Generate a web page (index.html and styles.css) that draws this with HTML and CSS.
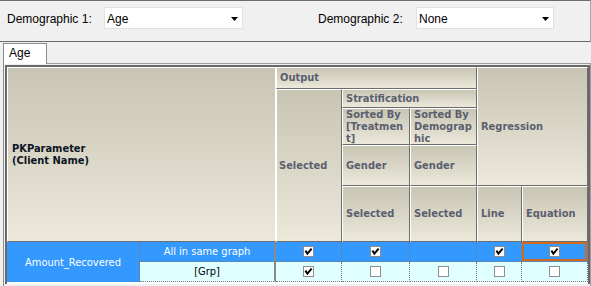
FILE: index.html
```html
<!DOCTYPE html>
<html>
<head>
<meta charset="utf-8">
<link rel="stylesheet" href="styles.css">
</head>
<body>
<div class="app">
  <div class="toolbar">
    <span class="lbl lbl1">Demographic 1:</span>
    <div class="combo combo1"><span class="val">Age</span><svg class="arrow" width="7" height="4" viewBox="0 0 7 4"><polygon points="0,0 7,0 3.5,4" fill="#000"/></svg></div>
    <span class="lbl lbl2">Demographic 2:</span>
    <div class="combo combo2"><span class="val">None</span><svg class="arrow" width="7" height="4" viewBox="0 0 7 4"><polygon points="0,0 7,0 3.5,4" fill="#000"/></svg></div>
  </div>
  <div class="tabs">
    <div class="tab">Age</div>
    <div class="tabfill"></div>
  </div>
  <div class="page">
    <div class="grid">
      <div class="h pk">PKParameter<br>(Client Name)</div>
      <div class="h out">Output</div>
      <div class="h reg">Regression</div>
      <div class="h sel">Selected</div>
      <div class="h strat">Stratification</div>
      <div class="h st1">Sorted By<br>[Treatmen<br>t]</div>
      <div class="h st2">Sorted By<br>Demograp<br>hic</div>
      <div class="h g1">Gender</div>
      <div class="h g2">Gender</div>
      <div class="h s1">Selected</div>
      <div class="h s2">Selected</div>
      <div class="h ln">Line</div>
      <div class="h eq">Equation</div>

      <div class="d blue amount">Amount_Recovered</div>
      <div class="d blue name">All in same graph</div>
      <div class="d blue chk"><svg class="cb" width="11" height="11" viewBox="0 0 11 11"><rect x="0.5" y="0.5" width="10" height="10" fill="#fff" stroke="#8e8e8e"/><path d="M2.4 4.6 L4.4 7.6 L8.6 2.6" fill="none" stroke="#000" stroke-width="1.9"/></svg></div>
      <div class="d blue chk"><svg class="cb" width="11" height="11" viewBox="0 0 11 11"><rect x="0.5" y="0.5" width="10" height="10" fill="#fff" stroke="#8e8e8e"/><path d="M2.4 4.6 L4.4 7.6 L8.6 2.6" fill="none" stroke="#000" stroke-width="1.9"/></svg></div>
      <div class="d blue chk"></div>
      <div class="d blue chk"><svg class="cb" width="11" height="11" viewBox="0 0 11 11"><rect x="0.5" y="0.5" width="10" height="10" fill="#fff" stroke="#8e8e8e"/><path d="M2.4 4.6 L4.4 7.6 L8.6 2.6" fill="none" stroke="#000" stroke-width="1.9"/></svg></div>
      <div class="d blue chk focus"><svg class="cb" width="11" height="11" viewBox="0 0 11 11"><rect x="0.5" y="0.5" width="10" height="10" fill="#fff" stroke="#8e8e8e"/><path d="M2.4 4.6 L4.4 7.6 L8.6 2.6" fill="none" stroke="#000" stroke-width="1.9"/></svg></div>

      <div class="d cyan name grp">[Grp]</div>
      <div class="d cyan chk"><svg class="cb" width="11" height="11" viewBox="0 0 11 11"><rect x="0.5" y="0.5" width="10" height="10" fill="#fff" stroke="#8e8e8e"/><path d="M2.4 4.6 L4.4 7.6 L8.6 2.6" fill="none" stroke="#000" stroke-width="1.9"/></svg></div>
      <div class="d cyan chk"><svg class="cb" width="11" height="11" viewBox="0 0 11 11"><rect x="0.5" y="0.5" width="10" height="10" fill="#fff" stroke="#8e8e8e"/></svg></div>
      <div class="d cyan chk"><svg class="cb" width="11" height="11" viewBox="0 0 11 11"><rect x="0.5" y="0.5" width="10" height="10" fill="#fff" stroke="#8e8e8e"/></svg></div>
      <div class="d cyan chk"><svg class="cb" width="11" height="11" viewBox="0 0 11 11"><rect x="0.5" y="0.5" width="10" height="10" fill="#fff" stroke="#8e8e8e"/></svg></div>
      <div class="d cyan chk"><svg class="cb" width="11" height="11" viewBox="0 0 11 11"><rect x="0.5" y="0.5" width="10" height="10" fill="#fff" stroke="#8e8e8e"/></svg></div>
    </div>
  </div>
</div>
</body>
</html>
```

FILE: styles.css
```css
html, body {
  margin: 0;
  padding: 0;
  background: #f0f0f0;
  overflow: hidden;
}
.app {
  width: 591px;
  height: 286px;
  overflow: hidden;
  font-family: "Liberation Sans", Arial, sans-serif;
  font-size: 12px;
  color: #000;
}
.toolbar {
  box-sizing: border-box;
  height: 42px;
  border-top: 1px solid #6b6b6b;
  border-bottom: 1px solid #6b6b6b;
  border-right: 1px solid #a8a8a8;
  display: flex;
  align-items: baseline;
  padding: 6px 0 0 7px;
}
.lbl {
  line-height: 18px;
}
.lbl1 { width: 97px; }
.lbl2 { width: 98px; margin-left: 75px; }
.combo {
  box-sizing: border-box;
  height: 22px;
  background: #fff;
  border: 1px solid #e1e1e1;
  display: flex;
  align-items: center;
  padding: 2px 4px 0 2px;
  line-height: 18px;
}
.combo1 { width: 139px; }
.combo2 { width: 138px; }
.combo .val { flex: 1; }
.arrow { display: block; }

.tabs {
  display: flex;
  height: 22px;
  box-sizing: border-box;
}
.tab {
  box-sizing: border-box;
  margin-top: 1px;
  margin-left: 3px;
  width: 44px;
  height: 21px;
  background: #fff;
  border: 1px solid #8c8c8c;
  border-bottom: none;
  padding-left: 5px;
  line-height: 18px;
}
.tabfill {
  flex: 1;
  border-bottom: 1px solid #a0a0a0;
}
.page {
  margin-left: 3px;
  width: 588px;
  box-sizing: border-box;
  border-left: 1px solid #8c8c8c;
  border-right: 1px solid #a0a0a0;
  padding: 1px 0 0 1px;
  height: 222px;
  overflow: hidden;
}
.grid {
  display: grid;
  grid-template-columns: 133px 136px 66px 68px 67px 45px 66px;
  grid-template-rows: 22px 19px 37px 41px 56px 20px 20px 2px;
  border: 2px solid #696969;
  border-bottom: none;
  width: 581px;
  background: #fff;
  font-family: "DejaVu Sans Condensed", "DejaVu Sans", sans-serif;
  font-size: 11px;
}
.h {
  box-sizing: border-box;
  background: linear-gradient(#c9c5b4, #ece8da);
  border-left: 1px solid #fff;
  border-top: 1px solid #fff;
  border-right: 1px solid #6d6d6d;
  border-bottom: 1px solid #6d6d6d;
  display: flex;
  align-items: center;
  padding-left: 3px;
  font-weight: bold;
  color: #5a5f6f;
  line-height: 12px;
  overflow: visible;
  white-space: nowrap;
}
.pk {
  grid-column: 1 / 3;
  grid-row: 1 / 6;
  border-right: 1px solid #fff;
  color: #0c1525;
  padding-left: 4px;
}
.out { grid-column: 3 / 6; grid-row: 1 / 2; }
.reg { grid-column: 6 / 8; grid-row: 1 / 5; }
.sel { grid-column: 3 / 4; grid-row: 2 / 6; padding-left: 2px; }
.strat { grid-column: 4 / 6; grid-row: 2 / 3; }
.st1 { grid-column: 4 / 5; grid-row: 3 / 4; }
.st2 { grid-column: 5 / 6; grid-row: 3 / 4; }
.g1 { grid-column: 4 / 5; grid-row: 4 / 5; }
.g2 { grid-column: 5 / 6; grid-row: 4 / 5; }
.s1 { grid-column: 4 / 5; grid-row: 5 / 6; }
.s2 { grid-column: 5 / 6; grid-row: 5 / 6; }
.ln { grid-column: 6 / 7; grid-row: 5 / 6; }
.eq { grid-column: 7 / 8; grid-row: 5 / 6; }

.d {
  box-sizing: border-box;
  display: flex;
  align-items: center;
  justify-content: center;
  border-right: 1px dotted #7a7a7a;
  border-bottom: 1px dotted #7a7a7a;
  line-height: 13px;
}
.blue { background: #3399ff; color: #fff; }
.cyan { background: #e0ffff; color: #000; }
.amount {
  grid-column: 1 / 2;
  grid-row: 6 / 8;
  border-bottom: none;
}
.name {
  border-right: 2px solid #8a8a8a;
}
.cb { display: block; }
.focus {
  box-shadow: inset 0 0 0 2px #d2691e;
}
```
